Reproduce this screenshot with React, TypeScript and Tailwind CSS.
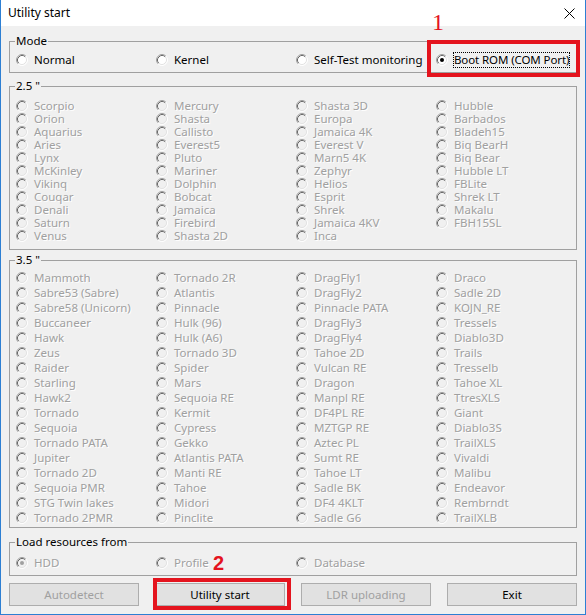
import React from 'react';

const col25: string[][] = [
  ['Scorpio', 'Orion', 'Aquarius', 'Aries', 'Lynx', 'McKinley', 'Vikinq', 'Couqar', 'Denali', 'Saturn', 'Venus'],
  ['Mercury', 'Shasta', 'Callisto', 'Everest5', 'Pluto', 'Mariner', 'Dolphin', 'Bobcat', 'Jamaica', 'Firebird', 'Shasta 2D'],
  ['Shasta 3D', 'Europa', 'Jamaica 4K', 'Everest V', 'Marn5 4K', 'Zephyr', 'Helios', 'Esprit', 'Shrek', 'Jamaica 4KV', 'Inca'],
  ['Hubble', 'Barbados', 'Bladeh15', 'Biq BearH', 'Biq Bear', 'Hubble LT', 'FBLite', 'Shrek LT', 'Makalu', 'FBH15SL'],
];

const col35: string[][] = [
  ['Mammoth', 'Sabre53 (Sabre)', 'Sabre58 (Unicorn)', 'Buccaneer', 'Hawk', 'Zeus', 'Raider', 'Starling', 'Hawk2', 'Tornado', 'Sequoia', 'Tornado PATA', 'Jupiter', 'Tornado 2D', 'Sequoia PMR', 'STG Twin lakes', 'Tornado 2PMR'],
  ['Tornado 2R', 'Atlantis', 'Pinnacle', 'Hulk (96)', 'Hulk (A6)', 'Tornado 3D', 'Spider', 'Mars', 'Sequoia RE', 'Kermit', 'Cypress', 'Gekko', 'Atlantis PATA', 'Manti RE', 'Tahoe', 'Midori', 'Pinclite'],
  ['DragFly1', 'DragFly2', 'Pinnacle PATA', 'DragFly3', 'DragFly4', 'Tahoe 2D', 'Vulcan RE', 'Dragon', 'Manpl RE', 'DF4PL RE', 'MZTGP RE', 'Aztec PL', 'Sumt RE', 'Tahoe LT', 'Sadle BK', 'DF4 4KLT', 'Sadle G6'],
  ['Draco', 'Sadle 2D', 'KOJN_RE', 'Tressels', 'Diablo3D', 'Trails', 'Tresselb', 'Tahoe XL', 'TtresXLS', 'Giant', 'Diablo3S', 'TrailXLS', 'Vivaldi', 'Malibu', 'Endeavor', 'Rembrndt', 'TrailXLB'],
];

const RadioDot = ({ checked, disabled }: { checked?: boolean; disabled?: boolean }) => (
  <svg width="12" height="12" viewBox="0 0 12 12" className="shrink-0">
    <circle cx="6" cy="6" r="5" fill={disabled ? '#f0f0f0' : '#ffffff'} />
    <path d="M2.11 9.89A5.5 5.5 0 0 1 9.89 2.11" fill="none" stroke="#a0a0a0" />
    <path d="M2.82 9.18A4.5 4.5 0 0 1 9.18 2.82" fill="none" stroke="#696969" />
    <path d="M9.89 2.11A5.5 5.5 0 0 1 2.11 9.89" fill="none" stroke="#ffffff" />
    <path d="M9.18 2.82A4.5 4.5 0 0 1 2.82 9.18" fill="none" stroke="#e3e3e3" />
    {checked && <circle cx="6" cy="6" r="2" fill={disabled ? '#a0a0a0' : '#000000'} />}
  </svg>
);

// h is both row height and line height, e.g. "h-[13px] leading-[13px]"
const Option = ({ label, disabled, checked, h }: { label: string; disabled?: boolean; checked?: boolean; h: string }) => (
  <div className={`flex items-center ${h}`}>
    <RadioDot checked={checked} disabled={disabled} />
    <span className={disabled ? 'ml-[6px] whitespace-nowrap text-[#a0a0a0] [text-shadow:1px_1px_0_#ffffff]' : 'ml-[6px] whitespace-nowrap text-black'}>
      {label}
    </span>
  </div>
);

const Group = ({ title, children, className }: { title: string; children: React.ReactNode; className: string }) => (
  <fieldset className={`border border-[#a0a0a0] ${className}`}>
    <legend className="ml-[5px] px-[1px] leading-[16px] text-black">{title}</legend>
    {children}
  </fieldset>
);

const ModelGrid = ({ cols, h }: { cols: string[][]; h: string }) => (
  <div className="grid grid-cols-[140px_140px_140px_1fr] px-[6px]">
    {cols.map((c, i) => (
      <div key={i} className="flex flex-col">
        {c.map((m) => (
          <Option key={m} label={m} disabled h={h} />
        ))}
      </div>
    ))}
  </div>
);

const Button = ({ label, disabled }: { label: string; disabled?: boolean }) => (
  <div
    className={`flex h-[23px] w-[130px] items-center justify-center border border-[#adadad] bg-[#e1e1e1] leading-[16px] ${
      disabled ? 'text-[#a0a0a0]' : 'text-black'
    }`}
  >
    {label}
  </div>
);

export default function App() {
  return (
    <div className="relative flex h-[615px] w-[586px] flex-col border-x border-b border-[#2d7fd3] bg-[#f0f0f0] font-['Noto_Sans',sans-serif] text-[11.5px]">
      <div className="flex h-[26px] shrink-0 items-center justify-between bg-white pl-[7px] pr-[10px] text-[12px] text-black">
        <span>Utility start</span>
        <svg width="11" height="11" viewBox="0 0 11 11">
          <path d="M0.5 0.5L10.5 10.5M10.5 0.5L0.5 10.5" stroke="#000" strokeWidth="1" />
        </svg>
      </div>

      <div className="flex flex-col px-[8px] pt-[7px]">
        <Group title="Mode" className="pb-[4px]">
          <div className="grid grid-cols-[140px_140px_140px_1fr] px-[6px] pt-[3px]">
            <Option label="Normal" h="h-[16px] leading-[16px]" />
            <Option label="Kernel" h="h-[16px] leading-[16px]" />
            <Option label="Self-Test monitoring" h="h-[16px] leading-[16px]" />
            <div className="flex h-[16px] items-center">
              <RadioDot checked />
              <span className="ml-[5px] whitespace-nowrap border border-dotted border-black leading-[14px] tracking-[-0.1px] text-black">
                Boot ROM (COM Port)
              </span>
            </div>
          </div>
        </Group>

        <Group title={'2.5 "'} className="mt-[5px] pb-[7px]">
          <div className="pt-[5px]">
            <ModelGrid cols={col25} h="h-[13px] leading-[13px]" />
          </div>
        </Group>

        <Group title={'3.5 "'} className="mt-[2px] pb-[2px]">
          <div className="pt-[2px]">
            <ModelGrid cols={col35} h="h-[15px] leading-[15px]" />
          </div>
        </Group>

        <Group title="Load resources from" className="mt-[6px] pb-[4px]">
          <div className="grid grid-cols-[140px_140px_140px_1fr] px-[6px] pt-[5px]">
            <Option label="HDD" disabled checked h="h-[16px] leading-[16px]" />
            <Option label="Profile" disabled h="h-[16px] leading-[16px]" />
            <Option label="Database" disabled h="h-[16px] leading-[16px]" />
          </div>
        </Group>

        <div className="mt-[7px] flex justify-between">
          <Button label="Autodetect" disabled />
          <Button label="Utility start" />
          <Button label="LDR uploading" disabled />
          <Button label="Exit" />
        </div>
      </div>

      {/* annotations */}
      <span className="absolute left-[431px] top-[8px] font-['Liberation_Serif',serif] text-[24px] leading-[28px] text-[#e4141e]">1</span>
      <div className="absolute left-[426px] top-[40px] h-[37px] w-[153px] border-[4px] border-[#e4141e]" />
      <span className="absolute left-[212px] top-[552px] font-['Liberation_Sans',sans-serif] text-[20px] font-bold leading-[22px] text-[#e4141e]">2</span>
      <div className="absolute left-[152px] top-[578px] h-[32px] w-[138px] border-[4px] border-[#e4141e]" />
    </div>
  );
}
